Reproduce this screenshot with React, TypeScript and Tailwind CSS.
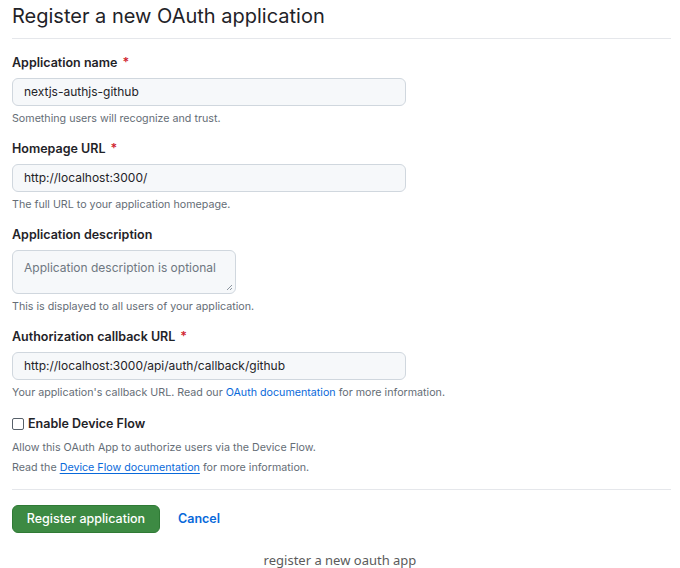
import React from 'react';

const font = { fontFamily: 'Inter, "Noto Sans", sans-serif' };

function Label({ text, required }: { text: string; required?: boolean }) {
  return (
    <div className="text-[12.5px] font-semibold text-[#1f2328] leading-[18px]">
      {text}
      {required && <span className="ml-[5px] text-[#cf222e]">*</span>}
    </div>
  );
}

function Help({ children }: { children: React.ReactNode }) {
  return <p className="text-[10.7px] leading-[16px] text-[#656d76]">{children}</p>;
}

function Field({ value }: { value: string }) {
  return (
    <div className="mt-[6px] w-[394px] h-[28px] flex items-center px-[11px] rounded-md border border-[#d0d7de] bg-[#f6f8fa] text-[12px] text-[#1f2328]">
      {value}
    </div>
  );
}

export default function App() {
  return (
    <div className="w-[680px] h-[568px] bg-white px-3 pt-[2px]" style={font}>
      <h1 className="text-[20px] leading-[28px] text-[#1f2328]">Register a new OAuth application</h1>
      <div className="mt-[8px] w-[659px] h-px bg-[#e5e7eb]" />

      {/* Application name */}
      <div className="mt-[15px]">
        <Label text="Application name" required />
        <Field value="nextjs-authjs-github" />
        <div className="mt-[5px]">
          <Help>Something users will recognize and trust.</Help>
        </div>
      </div>

      {/* Homepage */}
      <div className="mt-[13px]">
        <Label text="Homepage URL" required />
        <Field value="http://localhost:3000/" />
        <div className="mt-[5px]">
          <Help>The full URL to your application homepage.</Help>
        </div>
      </div>

      {/* Description */}
      <div className="mt-[13px]">
        <Label text="Application description" />
        <div className="relative mt-[6px] w-[224px] h-[44px] rounded-md border border-[#d0d7de] bg-[#f6f8fa] px-[11px] pt-[8px] text-[12px] text-[#6e7781] whitespace-nowrap">
          Application description is optional
          <svg className="absolute right-[2px] bottom-[2px]" width="8" height="8" viewBox="0 0 8 8">
            <path d="M7 2L2 7M7 5L5 7" stroke="#8c959f" strokeWidth="1" fill="none" />
          </svg>
        </div>
        <div className="mt-[5px]">
          <Help>This is displayed to all users of your application.</Help>
        </div>
      </div>

      {/* Callback */}
      <div className="mt-[13px]">
        <Label text="Authorization callback URL" required />
        <Field value="http://localhost:3000/api/auth/callback/github" />
        <div className="mt-[5px]">
          <Help>
            Your application's callback URL. Read our{' '}
            <span className="text-[#0969da]">OAuth documentation</span> for more information.
          </Help>
        </div>
      </div>

      {/* Device flow */}
      <div className="mt-[14px]">
        <label className="flex items-center gap-[4px] text-[12.5px] font-semibold text-[#1f2328] leading-[18px]">
          <span className="w-[12px] h-[12px] rounded-[2px] border border-[#57606a] bg-white" />
          Enable Device Flow
        </label>
        <div className="mt-[7px]">
          <Help>Allow this OAuth App to authorize users via the Device Flow.</Help>
        </div>
        <div className="mt-[4px]">
          <Help>
            Read the{' '}
            <span className="text-[#0969da] underline underline-offset-2 decoration-[#0969da]">Device Flow documentation</span>{' '}
            for more information.
          </Help>
        </div>
      </div>

      <div className="mt-[13px] w-[659px] h-px bg-[#e5e7eb]" />

      <div className="mt-[15px] flex items-center gap-[18px]">
        <button className="h-[28px] w-[148px] rounded-md border border-[#2f7a35] bg-[#3d8a43] text-white text-[12.5px] font-medium">
          Register application
        </button>
        <span className="text-[12.5px] font-semibold text-[#0969da]">Cancel</span>
      </div>

      <p className="mt-[18px] text-center text-[13px] text-[#5b5b5b]" style={{ fontFamily: '"Noto Sans", sans-serif' }}>
        register a new oauth app
      </p>
    </div>
  );
}
